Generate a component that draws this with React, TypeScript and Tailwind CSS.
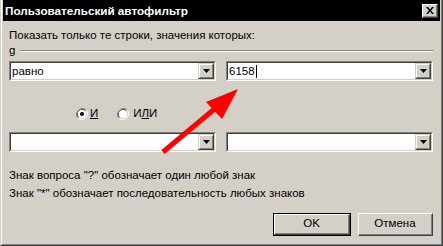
import React from "react";

const FONT = { fontFamily: '"Liberation Sans", Arial, sans-serif' };

function DropBtn() {
  return (
    <div className="w-[16px] h-[16px] border-t border-l border-t-[#d4d0c8] border-l-[#d4d0c8] border-b border-r border-b-[#404040] border-r-[#404040] bg-[#d4d0c8]">
      <div className="w-full h-full border-t border-l border-t-white border-l-white border-b border-r border-b-[#808080] border-r-[#808080] flex items-center justify-center">
        <svg width="7" height="4" viewBox="0 0 7 4">
          <polygon points="0,0 7,0 3.5,4" fill="#000" />
        </svg>
      </div>
    </div>
  );
}

function Combo({ text, cursor }: { text?: string; cursor?: boolean }) {
  return (
    <div className="w-[207px] h-[20px] border-t border-l border-t-[#808080] border-l-[#808080] border-b border-r border-b-white border-r-white">
      <div className="w-full h-full border-t border-l border-t-[#404040] border-l-[#404040] border-b border-r border-b-[#d4d0c8] border-r-[#d4d0c8] bg-white flex items-center">
        <div className="flex-1 pl-[1px] text-[11.5px] leading-[13px] text-black flex items-center">
          {text}
          {cursor && <span className="inline-block w-[1px] h-[13px] bg-black ml-[1px]" />}
        </div>
        <DropBtn />
      </div>
    </div>
  );
}

function Radio({ checked }: { checked?: boolean }) {
  return (
    <svg width="12" height="12" viewBox="0 0 12 12">
      <path d="M10.2 1.8 A6 6 0 0 0 1.8 10.2" fill="none" stroke="#808080" strokeWidth="1" />
      <path d="M1.8 10.2 A6 6 0 0 0 10.2 1.8" fill="none" stroke="#ffffff" strokeWidth="1" />
      <path d="M9.5 2.5 A5 5 0 0 0 2.5 9.5" fill="none" stroke="#404040" strokeWidth="1" />
      <path d="M2.5 9.5 A5 5 0 0 0 9.5 2.5" fill="none" stroke="#d4d0c8" strokeWidth="1" />
      <circle cx="6" cy="6" r="4" fill="#fff" />
      {checked && <circle cx="6" cy="6" r="2" fill="#000" />}
    </svg>
  );
}

function Button({ label, def }: { label: string; def?: boolean }) {
  const inner = (
    <div className="w-full h-full border-t border-l border-t-white border-l-white border-b border-r border-b-[#404040] border-r-[#404040]">
      <div className="w-full h-full border-b border-r border-b-[#808080] border-r-[#808080] flex items-center justify-center text-[11.5px] text-black">
        {label}
      </div>
    </div>
  );
  return def ? (
    <div className="w-[78px] h-[23px] border border-black">{inner}</div>
  ) : (
    <div className="w-[75px] h-[23px]">{inner}</div>
  );
}

export default function App() {
  return (
    <div className="w-[443px] h-[246px] bg-[#d4d0c8] relative overflow-hidden" style={FONT}>
      <div className="w-full h-full border-l border-l-[#d4d0c8] border-r border-r-[#404040] border-b border-b-[#404040]">
        <div className="w-full h-full border-l border-l-white border-r border-r-[#808080] border-b border-b-[#808080]">
          <div className="w-full h-full pl-[1px] pr-[1px] pb-[1px] flex flex-col">
            <div className="h-[21px] bg-black flex items-center justify-between pl-[2px] pr-[2px]">
              <span className="text-white font-bold text-[11.7px] leading-[13px]">Пользовательский автофильтр</span>
              <div className="w-[16px] h-[14px] bg-[#d4d0c8] border-t border-l border-t-white border-l-white border-b border-r border-b-[#404040] border-r-[#404040]">
                <div className="w-full h-full border-b border-r border-b-[#808080] border-r-[#808080] flex items-center justify-center">
                  <svg width="8" height="7" viewBox="0 0 8 7">
                    <path d="M0 0 L2 0 L4 2.5 L6 0 L8 0 L5 3.5 L8 7 L6 7 L4 4.5 L2 7 L0 7 L3 3.5 Z" fill="#000" />
                  </svg>
                </div>
              </div>
            </div>
            <div className="flex-1 flex flex-col pl-[6px] pr-[7px] text-[11.5px] text-black">
              <div className="mt-[8px] h-[13px] leading-[13px]">Показать только те строки, значения которых:</div>
              <div className="mt-[3px] h-[11px] leading-[11px] flex items-center">
                <span>g</span>
                <div className="flex-1 ml-[5px] h-[2px] border-t border-t-[#808080] border-b border-b-white" />
              </div>
              <div className="mt-[5px] flex justify-between">
                <Combo text="равно" />
                <Combo text="6158" cursor />
              </div>
              <div className="mt-[26px] h-[14px] flex items-center pl-[67px]">
                <Radio checked />
                <span className="ml-[2px] underline">И</span>
                <span className="ml-[19px] flex items-center">
                  <Radio />
                  <span className="ml-[4px]">И<span className="underline">Л</span>И</span>
                </span>
              </div>
              <div className="mt-[11px] flex justify-between">
                <Combo />
                <Combo />
              </div>
              <div className="mt-[17px] h-[13px] leading-[13px]">Знак вопроса "?" обозначает один любой знак</div>
              <div className="mt-[5px] h-[13px] leading-[13px]">Знак "*" обозначает последовательность любых знаков</div>
              <div className="mt-[13px] flex justify-end gap-[7px]">
                <Button label="OK" def />
                <Button label="Отмена" />
              </div>
            </div>
          </div>
        </div>
      </div>
      <svg className="absolute left-0 top-0 pointer-events-none" width="443" height="246">
        <line x1="163" y1="152" x2="218" y2="106" stroke="#ff0000" strokeWidth="5" />
        <polygon points="238,89 206,102 222,119" fill="#ff0000" />
      </svg>
    </div>
  );
}
